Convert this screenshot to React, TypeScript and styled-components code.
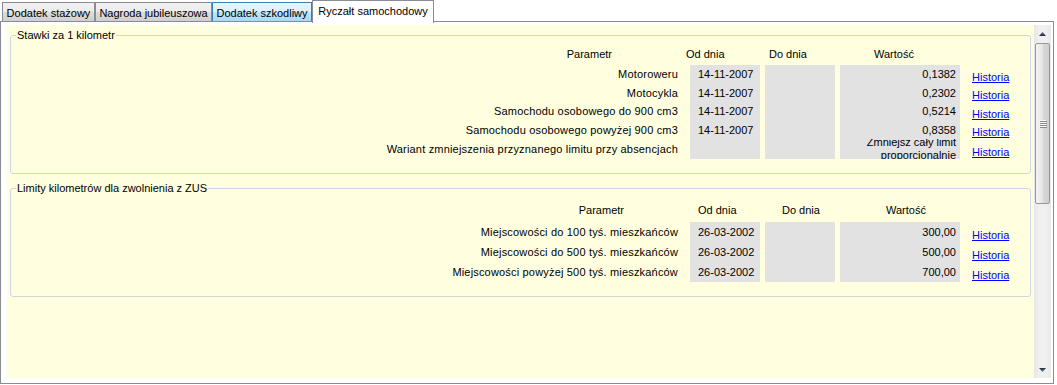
import React from "react";
import styled, { createGlobalStyle } from "styled-components";

const GlobalStyle = createGlobalStyle`
  html, body {
    margin: 0;
    padding: 0;
    background: #ffffff;
  }
  body {
    font-family: "Liberation Sans", Arial, sans-serif;
    font-size: 11px;
    color: #000000;
  }
`;

const Window = styled.div`
  width: 1054px;
  display: flex;
  flex-direction: column;
`;

const TabStrip = styled.div`
  position: relative;
  z-index: 1;
  display: flex;
  align-items: flex-end;
  height: 21px;
  padding-left: 2px;
`;

const Tab = styled.div<{ $w: number; $hover?: boolean; $active?: boolean }>`
  box-sizing: border-box;
  width: ${(p) => p.$w}px;
  height: ${(p) => (p.$active ? 23 : 19)}px;
  margin-bottom: ${(p) => (p.$active ? -2 : 0)}px;
  display: flex;
  align-items: center;
  justify-content: center;
  padding-top: ${(p) => (p.$active ? 0 : 1)}px;
  padding-bottom: ${(p) => (p.$active ? 3 : 0)}px;
  border: 1px solid ${(p) => (p.$hover ? "#3c7fb1" : "#898c95")};
  border-bottom: none;
  white-space: nowrap;
  background: ${(p) =>
    p.$active
      ? "#ffffff"
      : p.$hover
      ? "linear-gradient(to bottom, #eaf6fd 0%, #d9f0fc 50%, #bee6fd 51%, #a7d9f5 100%)"
      : "linear-gradient(to bottom, #f2f2f2 0%, #ebebeb 50%, #dddddd 51%, #cfcfcf 100%)"};
`;

const Frame = styled.div`
  box-sizing: border-box;
  width: 1054px;
  height: 363px;
  border: 1px solid #898c95;
  padding: 3px 2px 5px 6px;
  background: #ffffff;
`;

const Page = styled.div`
  display: flex;
  height: 100%;
`;

const Content = styled.div`
  flex: 1;
  background: #ffffe0;
  padding: 4px 3px 0 3px;
  overflow: hidden;
`;

const GroupBox = styled.fieldset`
  margin: 0 0 8px 0;
  padding: 0 0 14px 0;
  min-width: 0;
  border: 1px solid #cdd7e0;
  border-radius: 3px;
`;

const Legend = styled.legend`
  margin-left: 5px;
  padding: 0 1px;
  line-height: 13px;
  font-size: 11px;
`;

const Table = styled.div<{ $top: number }>`
  display: flex;
  flex-direction: column;
  padding-top: ${(p) => p.$top}px;
`;

const Row = styled.div<{ $h: number; $gap?: number }>`
  display: grid;
  grid-template-columns: 1fr 70px 70px 120px 65px;
  column-gap: 5px;
  height: ${(p) => p.$h}px;
  margin-bottom: ${(p) => p.$gap ?? 0}px;
`;

const HeaderText = styled.span<{ $x?: number; $right?: number }>`
  display: block;
  line-height: 13px;
  white-space: nowrap;
  margin-left: ${(p) => p.$x ?? 0}px;
  padding-right: ${(p) => p.$right ?? 0}px;
  text-align: ${(p) => (p.$right !== undefined ? "right" : "left")};
`;

const Label = styled.div`
  display: flex;
  align-items: center;
  justify-content: flex-end;
  padding-right: 7px;
  white-space: nowrap;
  letter-spacing: 0.18px;
`;

const Cell = styled.div<{ $align?: "left" | "right" }>`
  display: flex;
  align-items: center;
  justify-content: ${(p) => (p.$align === "right" ? "flex-end" : "flex-start")};
  background: #e2e2e2;
  padding: ${(p) => (p.$align === "right" ? "0 4px 0 0" : "0 0 0 8px")};
  overflow: hidden;
  white-space: nowrap;
`;

const MultiText = styled.div`
  white-space: normal;
  text-align: right;
  line-height: 13px;
`;

const LinkCell = styled.div`
  display: flex;
  align-items: center;
  padding-left: 7px;
`;

const HistoryLink = styled.a`
  margin-top: 5px;
  color: #0000ff;
  text-decoration: underline;
  cursor: pointer;
`;

const ScrollBar = styled.div`
  width: 17px;
  display: flex;
  flex-direction: column;
  background: linear-gradient(to right, #e6e6e6 0%, #f0f0f0 30%, #f0f0f0 70%, #e9e9e9 100%);
`;

const ScrollButton = styled.div`
  height: 17px;
  flex: none;
  display: flex;
  align-items: center;
  justify-content: center;
`;

const Thumb = styled.div`
  flex: none;
  box-sizing: border-box;
  height: 161px;
  margin: 1px 1px 0 1px;
  border: 1px solid #989898;
  border-radius: 2px;
  background: linear-gradient(to right, #f4f4f4 0%, #e6e6e6 50%, #d7d7d7 55%, #cfcfcf 100%);
  display: flex;
  align-items: center;
  justify-content: center;
`;

const Track = styled.div`
  flex: 1;
`;

interface RateRow {
  label: string;
  from: string;
  to: string;
  value: string;
  h: number;
  multi?: boolean;
}

interface HeaderPos {
  param: number;
  from: number;
  to: number;
  value: number;
}

const rates: RateRow[] = [
  { label: "Motoroweru", from: "14-11-2007", to: "", value: "0,1382", h: 18 },
  { label: "Motocykla", from: "14-11-2007", to: "", value: "0,2302", h: 19 },
  { label: "Samochodu osobowego do 900 cm3", from: "14-11-2007", to: "", value: "0,5214", h: 18 },
  { label: "Samochodu osobowego powyżej 900 cm3", from: "14-11-2007", to: "", value: "0,8358", h: 19 },
  {
    label: "Wariant zmniejszenia przyznanego limitu przy absencjach",
    from: "",
    to: "",
    value: "Zmniejsz cały limit proporcjonalnie",
    h: 20,
    multi: true,
  },
];

const limits: RateRow[] = [
  { label: "Miejscowości do 100 tyś. mieszkańców", from: "26-03-2002", to: "", value: "300,00", h: 20 },
  { label: "Miejscowości do 500 tyś. mieszkańców", from: "26-03-2002", to: "", value: "500,00", h: 20 },
  { label: "Miejscowości powyżej 500 tyś. mieszkańców", from: "26-03-2002", to: "", value: "700,00", h: 20 },
];

const ParamTable = ({
  rows,
  top,
  gap,
  pos,
}: {
  rows: RateRow[];
  top: number;
  gap: number;
  pos: HeaderPos;
}) => (
  <Table $top={top}>
    <Row $h={13} $gap={gap}>
      <HeaderText $right={pos.param}>Parametr</HeaderText>
      <HeaderText $x={pos.from}>Od dnia</HeaderText>
      <HeaderText $x={pos.to}>Do dnia</HeaderText>
      <HeaderText $x={pos.value}>Wartość</HeaderText>
      <div />
    </Row>
    {rows.map((r) => (
      <Row key={r.label} $h={r.h}>
        <Label>{r.label}</Label>
        <Cell>{r.from}</Cell>
        <Cell>{r.to}</Cell>
        <Cell $align="right">{r.multi ? <MultiText>{r.value}</MultiText> : r.value}</Cell>
        <LinkCell>
          <HistoryLink>Historia</HistoryLink>
        </LinkCell>
      </Row>
    ))}
  </Table>
);

const Arrow = ({ down }: { down?: boolean }) => (
  <svg width="7" height="4" viewBox="0 0 7 4">
    <defs>
      <linearGradient id={down ? "ad" : "au"} x1="0" y1="0" x2="0" y2="1">
        <stop offset="0" stopColor={down ? "#2a2a3a" : "#6a5a8a"} />
        <stop offset="1" stopColor={down ? "#5a8a8a" : "#2a2a3a"} />
      </linearGradient>
    </defs>
    <polygon
      points={down ? "0,0 7,0 3.5,4" : "3.5,0 7,4 0,4"}
      fill={`url(#${down ? "ad" : "au"})`}
    />
  </svg>
);

const Grip = () => (
  <svg width="8" height="8" viewBox="0 0 8 8">
    {[0, 2, 4, 6].map((y) => (
      <g key={y}>
        <rect x="0" y={y} width="7" height="1" fill="#f8f8f8" />
        <rect x="1" y={y + 1} width="7" height="1" fill="#8a8a8a" />
      </g>
    ))}
  </svg>
);

export default function App() {
  return (
    <>
      <GlobalStyle />
      <Window>
        <TabStrip>
          <Tab $w={93}>Dodatek stażowy</Tab>
          <Tab $w={117}>Nagroda jubileuszowa</Tab>
          <Tab $w={100} $hover>
            Dodatek szkodliwy
          </Tab>
          <Tab $w={122} $active>
            Ryczałt samochodowy
          </Tab>
        </TabStrip>
        <Frame>
          <Page>
            <Content>
              <GroupBox>
                <Legend>Stawki za 1 kilometr</Legend>
                <ParamTable rows={rates} top={6} gap={4} pos={{ param: 73, from: -4, to: 4, value: 34 }} />
              </GroupBox>
              <GroupBox>
                <Legend>Limity kilometrów dla zwolnienia z ZUS</Legend>
                <ParamTable rows={limits} top={9} gap={5} pos={{ param: 61, from: 8, to: 17, value: 46 }} />
              </GroupBox>
            </Content>
            <ScrollBar>
              <ScrollButton>
                <Arrow />
              </ScrollButton>
              <Thumb>
                <Grip />
              </Thumb>
              <Track />
              <ScrollButton>
                <Arrow down />
              </ScrollButton>
            </ScrollBar>
          </Page>
        </Frame>
      </Window>
    </>
  );
}
